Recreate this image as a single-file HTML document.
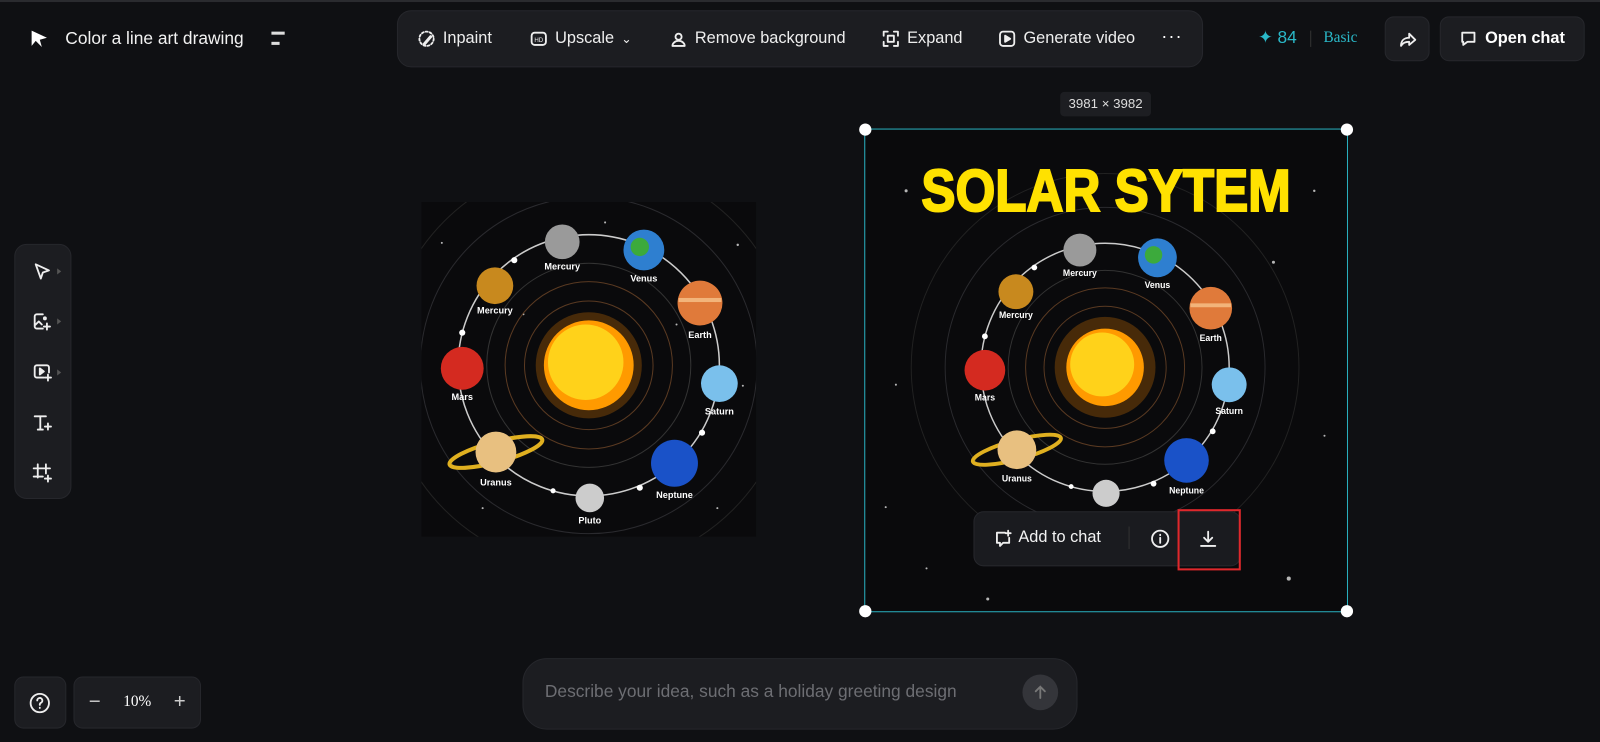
<!DOCTYPE html>
<html><head><meta charset="utf-8"><style>
*{margin:0;padding:0;box-sizing:border-box}
body{width:1600px;height:742px;background:#0f1013;font-family:"Liberation Sans",sans-serif;color:#fff;position:relative;overflow:hidden}
#w{position:absolute;left:0;top:0;width:1568px;height:727px;transform:scale(1.0204);transform-origin:0 0}
.abs{position:absolute}
.pill{background:#1c1d21;border:1px solid #26272c}
.tb{display:flex;align-items:center;gap:7px;font-size:16px;color:#eee}
svg.i{fill:none;stroke:#eee;stroke-width:1.8;stroke-linecap:round;stroke-linejoin:round}
</style></head><body><div id="w">
<div class="abs" style="left:0;top:0;width:1600px;height:2px;background:#2a2b2f"></div>
<svg class="abs" style="left:28px;top:28px" width="20" height="20" viewBox="0 0 20 20"><path d="M3 2 L18 9 L11 11 L13 18 L7 12 L3 17 Z" fill="#fff"/></svg>
<div class="abs" style="left:64px;top:28px;font-size:17px;color:#f2f2f2">Color a line art drawing</div>
<div class="abs" style="left:266px;top:31px;width:13px;height:3px;background:#ddd"></div>
<div class="abs" style="left:266px;top:41px;width:8px;height:3px;background:#ddd"></div>

<div class="abs pill" style="left:389px;top:10px;width:790px;height:56px;border-radius:14px;display:flex;align-items:center;padding-left:19px;gap:0">
 <div class="tb" style="width:110px"><svg class="i" width="18" height="18" viewBox="0 0 18 18"><circle cx="9" cy="9" r="7" stroke-dasharray="2 2"/><path d="M7 14l6-7" stroke-width="3"/></svg>Inpaint</div>
 <div class="tb" style="width:137px"><svg class="i" width="18" height="18" viewBox="0 0 18 18"><rect x="2" y="3" width="14" height="12" rx="3"/><text x="9" y="12" font-size="6" fill="#eee" stroke="none" text-anchor="middle" font-family="Liberation Sans">HD</text></svg>Upscale <span style="font-size:12px">&#8964;</span></div>
 <div class="tb" style="width:208px"><svg class="i" width="18" height="18" viewBox="0 0 18 18"><circle cx="9" cy="7" r="3"/><path d="M3 16c0-3 3-5 6-5s6 2 6 5z"/></svg>Remove background</div>
 <div class="tb" style="width:114px"><svg class="i" width="18" height="18" viewBox="0 0 18 18"><path d="M2 6V2h4M12 2h4v4M16 12v4h-4M6 16H2v-4"/><rect x="6" y="6" width="6" height="6"/></svg>Expand</div>
 <div class="tb" style="width:160px"><svg class="i" width="18" height="18" viewBox="0 0 18 18"><rect x="2" y="2" width="14" height="14" rx="3"/><path d="M7 6l5 3-5 3z" fill="#eee"/></svg>Generate video</div>
 <div style="font-size:18px;letter-spacing:1px;margin-top:-6px">···</div>
</div>

<div class="abs" style="left:1233px;top:27px;font-size:17px;color:#2ab8c8">&#10022; 84</div>
<div class="abs" style="left:1284px;top:30px;width:1px;height:16px;background:#333"></div>
<div class="abs" style="left:1297px;top:29px;font-size:15px;color:#2ab8c8;font-family:'Liberation Serif',serif">Basic</div>
<div class="abs pill" style="left:1357px;top:16px;width:44px;height:44px;border-radius:9px"><svg class="i" style="position:absolute;left:12px;top:12px" width="20" height="20" viewBox="0 0 20 20"><path d="M11 4l6 6-6 5v-3c-4 0-6 1-8 4 0-5 3-8 8-8z"/></svg></div>
<div class="abs pill" style="left:1411px;top:16px;width:142px;height:44px;border-radius:9px;display:flex;align-items:center;justify-content:center;gap:7px;font-weight:bold;font-size:16px"><svg class="i" width="18" height="18" viewBox="0 0 18 18"><path d="M3 3h12v9H8l-4 3v-3H3z"/></svg>Open chat</div>

<div class="abs" style="left:1039px;top:90px;width:89px;height:24px;background:#1d1e22;border-radius:4px;font-size:13px;color:#ddd;text-align:center;line-height:24px">3981 × 3982</div>

<div class="abs pill" style="left:14px;top:239px;width:56px;height:250px;border-radius:12px"></div>
<svg class="i abs" style="left:31px;top:256px" width="20" height="20" viewBox="0 0 20 20"><path d="M4 3l13 6-6 2-2 6z"/></svg>
<svg class="i abs" style="left:31px;top:305px" width="20" height="20" viewBox="0 0 20 20"><path d="M11 3H5a2 2 0 0 0-2 2v10a2 2 0 0 0 2 2h6M3 14l4-4 3 3"/><circle cx="13" cy="7" r="1"/><path d="M15 12v6M12 15h6"/></svg>
<svg class="i abs" style="left:31px;top:354px" width="20" height="20" viewBox="0 0 20 20"><path d="M12 16H5a2 2 0 0 1-2-2V6a2 2 0 0 1 2-2h10a2 2 0 0 1 2 2v5"/><path d="M8 7l4 3-4 3z" fill="#eee"/><path d="M16 13v6M13 16h6"/></svg>
<svg class="i abs" style="left:31px;top:404px" width="20" height="20" viewBox="0 0 20 20"><path d="M3 4h11M8.5 4v13M6 17h5M16 11v6M13 14h6"/></svg>
<svg class="i abs" style="left:31px;top:453px" width="20" height="20" viewBox="0 0 20 20"><path d="M6 2v13M14 2v9M2 6h16M2 14h9M16 13v6M13 16h6"/></svg>
<div class="abs" style="left:56px;top:263px;border-left:4px solid #555;border-top:3px solid transparent;border-bottom:3px solid transparent"></div>
<div class="abs" style="left:56px;top:312px;border-left:4px solid #555;border-top:3px solid transparent;border-bottom:3px solid transparent"></div>
<div class="abs" style="left:56px;top:362px;border-left:4px solid #555;border-top:3px solid transparent;border-bottom:3px solid transparent"></div>

<svg class="abs" style="left:413px;top:198px" width="328" height="328" viewBox="0 0 328 328">
<rect width="328" height="328" fill="#0a0a0c"/>
<g fill="#fff" opacity=".7"><circle cx="20" cy="40" r="1"/><circle cx="310" cy="42" r="1.2"/><circle cx="60" cy="300" r="1"/><circle cx="290" cy="300" r="1"/><circle cx="35" cy="150" r="1"/><circle cx="315" cy="180" r="1"/><circle cx="180" cy="20" r="1"/><circle cx="250" cy="120" r="1"/><circle cx="100" cy="110" r="1"/></g>
<g transform="translate(164,160)" font-family="Liberation Sans" font-size="9" font-weight="bold" fill="#fff" text-anchor="middle">
<g fill="none"><circle r="200" stroke="#222"/><circle r="165" stroke="#2a2a2e"/><circle r="100" stroke="#333"/><circle r="82" stroke="#5a3a22"/><circle r="63" stroke="#5a3a22"/><circle r="128" stroke="#ccc" stroke-width="1.5"/></g>
<circle r="52" fill="#ff8c00" opacity=".25"/><circle r="44" fill="#ff9a00"/><circle r="37" cx="-3" cy="-3" fill="#ffd21a"/>
<circle cx="-26" cy="-121" r="17" fill="#9a9a9a"/><text x="-26" y="-94">Mercury</text>
<circle cx="54" cy="-113" r="20" fill="#2e7fd0"/><circle cx="50" cy="-116" r="9" fill="#3caa3c"/><text x="54" y="-82">Venus</text>
<circle cx="-92" cy="-78" r="18" fill="#c8891e"/><text x="-92" y="-51">Mercury</text>
<circle cx="109" cy="-61" r="22" fill="#e07a3a"/><rect x="88" y="-66" width="42" height="4" fill="#f2b47a"/><text x="109" y="-27">Earth</text>
<circle cx="-124" cy="3" r="21" fill="#d42a20"/><text x="-124" y="34">Mars</text>
<circle cx="128" cy="18" r="18" fill="#7ac0ec"/><text x="128" y="48">Saturn</text>
<ellipse cx="-91" cy="85" rx="47" ry="10" fill="none" stroke="#e0b020" stroke-width="4" transform="rotate(-15 -91 85)"/><circle cx="-91" cy="85" r="20" fill="#e8c080"/><text x="-91" y="118">Uranus</text>
<circle cx="84" cy="96" r="23" fill="#1a52c8"/><text x="84" y="130">Neptune</text>
<circle cx="1" cy="130" r="14" fill="#ccc"/><text x="1" y="155">Pluto</text>
<g fill="#fff"><circle cx="-73" cy="-103" r="3"/><circle cx="-124" cy="-32" r="3"/><circle cx="111" cy="66" r="3"/><circle cx="-35" cy="123" r="2.5"/><circle cx="50" cy="120" r="3"/></g>
</g></svg>

<div class="abs" style="left:847px;top:126px;width:474px;height:474px;border:1px solid #2ab8c8"></div>
<svg class="abs" style="left:848px;top:127px" width="472" height="472" viewBox="0 0 472 472">
<rect width="472" height="472" fill="#0a0a0c"/>
<g fill="#fff" opacity=".7"><circle cx="40" cy="60" r="1.5"/><circle cx="440" cy="60" r="1.2"/><circle cx="60" cy="430" r="1"/><circle cx="415" cy="440" r="2"/><circle cx="30" cy="250" r="1"/><circle cx="450" cy="300" r="1"/><circle cx="400" cy="130" r="1.5"/><circle cx="120" cy="460" r="1.5"/><circle cx="20" cy="370" r="1"/></g>
<g transform="translate(235,233) scale(0.95)" font-family="Liberation Sans" font-size="9" font-weight="bold" fill="#fff" text-anchor="middle">
<g fill="none"><circle r="200" stroke="#222"/><circle r="165" stroke="#2a2a2e"/><circle r="100" stroke="#333"/><circle r="82" stroke="#5a3a22"/><circle r="63" stroke="#5a3a22"/><circle r="128" stroke="#ccc" stroke-width="1.5"/></g>
<circle r="52" fill="#ff8c00" opacity=".25"/><circle r="40" fill="#ff9a00"/><circle r="33" cx="-3" cy="-3" fill="#ffd21a"/>
<circle cx="-26" cy="-121" r="17" fill="#9a9a9a"/><text x="-26" y="-94">Mercury</text>
<circle cx="54" cy="-113" r="20" fill="#2e7fd0"/><circle cx="50" cy="-116" r="9" fill="#3caa3c"/><text x="54" y="-82">Venus</text>
<circle cx="-92" cy="-78" r="18" fill="#c8891e"/><text x="-92" y="-51">Mercury</text>
<circle cx="109" cy="-61" r="22" fill="#e07a3a"/><rect x="88" y="-66" width="42" height="4" fill="#f2b47a"/><text x="109" y="-27">Earth</text>
<circle cx="-124" cy="3" r="21" fill="#d42a20"/><text x="-124" y="34">Mars</text>
<circle cx="128" cy="18" r="18" fill="#7ac0ec"/><text x="128" y="48">Saturn</text>
<ellipse cx="-91" cy="85" rx="47" ry="10" fill="none" stroke="#e0b020" stroke-width="4" transform="rotate(-15 -91 85)"/><circle cx="-91" cy="85" r="20" fill="#e8c080"/><text x="-91" y="118">Uranus</text>
<circle cx="84" cy="96" r="23" fill="#1a52c8"/><text x="84" y="130">Neptune</text>
<circle cx="1" cy="130" r="14" fill="#ccc"/>
<g fill="#fff"><circle cx="-73" cy="-103" r="3"/><circle cx="-124" cy="-32" r="3"/><circle cx="111" cy="66" r="3"/><circle cx="-35" cy="123" r="2.5"/><circle cx="50" cy="120" r="3"/></g>
</g>
<text x="236" y="80" font-family="Liberation Sans" font-weight="bold" font-size="58" fill="#ffe100" stroke="#ffe100" stroke-width="2" text-anchor="middle" textLength="362" lengthAdjust="spacingAndGlyphs">SOLAR SYTEM</text>
</svg>
<div class="abs" style="left:842px;top:121px;width:12px;height:12px;border-radius:50%;background:#fff"></div>
<div class="abs" style="left:1314px;top:121px;width:12px;height:12px;border-radius:50%;background:#fff"></div>
<div class="abs" style="left:842px;top:593px;width:12px;height:12px;border-radius:50%;background:#fff"></div>
<div class="abs" style="left:1314px;top:593px;width:12px;height:12px;border-radius:50%;background:#fff"></div>

<div class="abs pill" style="left:954px;top:501px;width:262px;height:54px;border-radius:10px;background:#1a1b1f"></div>
<svg class="i abs" style="left:973px;top:518px" width="20" height="20" viewBox="0 0 20 20"><path d="M12 4H4v10h3v3l3-3h6V9M15 2v5M12.5 4.5h5"/></svg>
<div class="abs" style="left:998px;top:518px;font-size:16px;color:#f2f2f2">Add to chat</div>
<div class="abs" style="left:1106px;top:516px;width:1px;height:22px;background:#333"></div>
<svg class="i abs" style="left:1127px;top:518px" width="20" height="20" viewBox="0 0 20 20"><circle cx="10" cy="10" r="8"/><path d="M10 9v5M10 6v.5"/></svg>
<div class="abs" style="left:1154px;top:499px;width:62px;height:60px;border:2px solid #e0282c"></div>
<svg class="i abs" style="left:1174px;top:518px" width="20" height="20" viewBox="0 0 20 20"><path d="M10 3v10M6 9l4 4 4-4M3 17h14"/></svg>

<div class="abs pill" style="left:14px;top:663px;width:51px;height:51px;border-radius:9px"></div>
<svg class="i abs" style="left:28px;top:678px" width="22" height="22" viewBox="0 0 22 22"><circle cx="11" cy="11" r="9"/><path d="M8.5 8.5a2.5 2.5 0 1 1 3.5 2.3c-1 .5-1 1.2-1 2M11 15.5v.3"/></svg>
<div class="abs pill" style="left:72px;top:663px;width:125px;height:51px;border-radius:9px;display:flex;align-items:center;justify-content:space-between;padding:0 14px;color:#ccc;font-size:20px"><span>−</span><span style="font-family:'Liberation Serif',serif;font-size:15px;color:#fff">10%</span><span>+</span></div>
<div class="abs pill" style="left:512px;top:645px;width:544px;height:70px;border-radius:24px"></div>
<div class="abs" style="left:534px;top:668px;font-size:17px;color:#6d6e73">Describe your idea, such as a holiday greeting design</div>
<div class="abs" style="left:1002px;top:661px;width:35px;height:35px;border-radius:50%;background:#34353a"></div>
<svg class="abs" style="left:1010px;top:669px" width="19" height="19" viewBox="0 0 19 19"><path d="M9.5 15V4M5 8.5l4.5-4.5 4.5 4.5" fill="none" stroke="#777" stroke-width="1.8" stroke-linecap="round"/></svg>
</div></body></html>
